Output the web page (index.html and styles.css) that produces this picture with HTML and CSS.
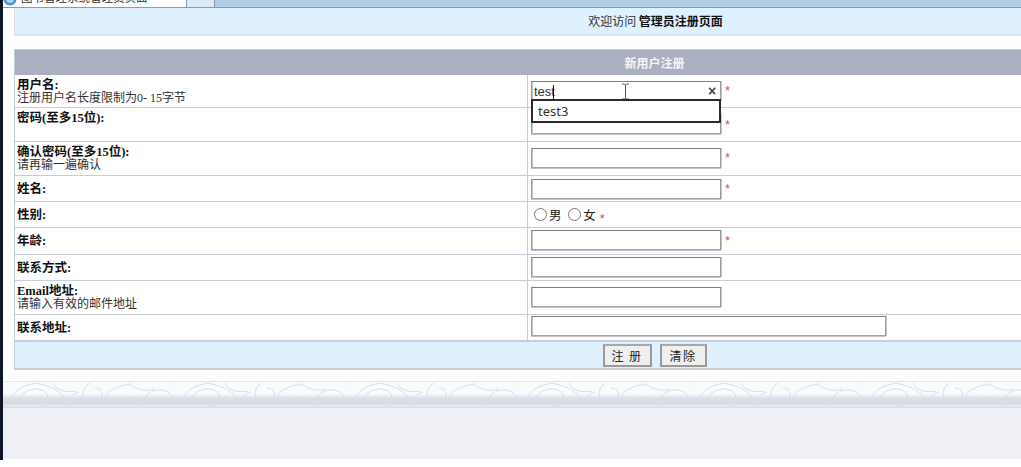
FILE: index.html
```html
<!DOCTYPE html>
<html lang="zh">
<head>
<meta charset="utf-8">
<title>管理员注册页面</title>
<link rel="stylesheet" href="styles.css">
</head>
<body>
<div class="edge"></div>
<div class="page">
  <div class="tabstrip">
    <div class="tab">
      <svg class="tab-icon" width="14" height="7" viewBox="0 0 14 7"><circle cx="7" cy="-1" r="6.5" fill="#3f8fd2"/><circle cx="7" cy="-1" r="4" fill="#a9d3f2"/></svg>
      <span class="tab-title">图书管理系统管理员页面</span>
    </div>
    <div class="tab-new"></div>
  </div>
  <div class="content">
    <div class="banner">欢迎访问 <b>管理员注册页面</b></div>
    <table class="form">
      <colgroup><col class="col-label"><col></colgroup>
      <tr class="head"><th colspan="2">新用户注册</th></tr>
      <tr class="h33">
        <td class="lab"><b>用户名:</b><br>注册用户名长度限制为0- 15字节</td>
        <td class="val val-first">
          <span class="field">
            <input class="txt" type="text" value="test">
            <span class="caret"></span>
            <span class="clear">×</span>
            <svg class="ibeam" width="9" height="17" viewBox="0 0 9 17"><path d="M1 1h2.500l1 1 1-1H8M4.500 2v13M1 16h2.500l1-1 1 1H8" fill="none" stroke="#555" stroke-width="1"/></svg>
            <span class="suggest">test3</span>
          </span><span class="req req-first">*</span>
        </td>
      </tr>
      <tr class="h34">
        <td class="lab"><b>密码(至多15位):</b></td>
        <td class="val val-low"><input class="txt" type="password"><span class="req">*</span></td>
      </tr>
      <tr class="h34">
        <td class="lab"><b>确认密码(至多15位):</b><br>请再输一遍确认</td>
        <td class="val"><input class="txt" type="password"><span class="req">*</span></td>
      </tr>
      <tr class="h26">
        <td class="lab lab-mid"><b>姓名:</b></td>
        <td class="val val-flat"><input class="txt" type="text"><span class="req">*</span></td>
      </tr>
      <tr class="h26">
        <td class="lab lab-mid"><b>性别:</b></td>
        <td class="val radios">
          <label class="choice"><input class="radio" type="radio" name="sex">男</label>
          <label class="choice"><input class="radio" type="radio" name="sex">女</label>
          <span class="req">*</span>
        </td>
      </tr>
      <tr class="h27">
        <td class="lab lab-mid lab-age"><b>年龄:</b></td>
        <td class="val"><input class="txt" type="text"><span class="req">*</span></td>
      </tr>
      <tr class="h26">
        <td class="lab lab-mid"><b>联系方式:</b></td>
        <td class="val"><input class="txt" type="text"></td>
      </tr>
      <tr class="h34">
        <td class="lab"><b>Email地址:</b><br>请输入有效的邮件地址</td>
        <td class="val"><input class="txt" type="text"></td>
      </tr>
      <tr class="h26">
        <td class="lab lab-mid"><b>联系地址:</b></td>
        <td class="val val-raised"><input class="txt txt-wide" type="text"></td>
      </tr>
      <tr class="actions">
        <td colspan="2"><button class="btn btn-reg" type="button">注 册</button><button class="btn" type="button">清除</button></td>
      </tr>
    </table>
  </div>
  <div class="band">
    <svg class="band-art" width="100%" height="26">
      <defs>
        <pattern id="floral" width="172" height="26" patternUnits="userSpaceOnUse">
          <g fill="none" stroke="#d8dce6" stroke-width="1">
            <path d="M6 26C7 14 14 4 30 2M16 26c-2-9 3-17 14-19 9-1 16 4 15 11-1 5-6 8-11 6M22 26c0-5 4-8 9-7"/>
            <path d="M30 1c12 1 26 6 31 15 2 4 2 7 1 10M50 1c3 7 12 10 23 8M66 26c-2-8 2-14 10-16"/>
            <path d="M86 1c-7 6-8 14-2 18 6 3 13 1 15-5 1-5-2-8-7-8M104 26c-5-7-2-15 6-19 6-3 12-5 18-4"/>
            <path d="M112 26c2-6 8-11 16-10 7 1 10 5 9 10M126 1c6 6 16 9 25 6M142 26c-3-7 0-14 8-17 8-3 17 0 20 7M158 26c0-5 3-8 7-8M170 1l2 2"/>
          </g>
        </pattern>
      </defs>
      <rect width="100%" height="26" fill="url(#floral)"/>
    </svg>
  </div>
  <div class="foot"></div>
</div>
</body>
</html>
```
FILE: styles.css
```css
html, body {
  margin: 0;
  height: 467px;
  overflow: hidden;
  background: #fff;
}
body {
  display: flex;
  align-items: flex-start;
  font-family: "Liberation Serif", "Noto Sans CJK SC", serif;
  font-size: 12px;
  color: #222;
}
.edge {
  flex: 0 0 3px;
  height: 460px;
  background: #0e1628;
}
.page {
  flex: 1;
  min-width: 0;
}
.tabstrip {
  display: flex;
  height: 7px;
  background: #b3cee7;
  border-bottom: 1px solid #8f9aa8;
  overflow: hidden;
}
.tab {
  display: flex;
  width: 183px;
  background: #fff;
  border-right: 1px solid #8f9aa8;
  font-family: "Noto Sans CJK SC", sans-serif;
  font-size: 11.500px;
  line-height: 12px;
  color: #333;
}
.tab-icon {
  flex: none;
  margin-right: 4px;
}
.tab-title {
  margin-top: -9px;
  white-space: nowrap;
  height: 16px;
}
.tab-new {
  width: 27px;
  background: #dce9f8;
  border-right: 1px solid #8f9aa8;
}
.content {
  padding-left: 11px;
  overflow: hidden;
}
.banner {
  box-sizing: border-box;
  width: 1282px;
  height: 28px;
  background: #dff0fe;
  border-left: 1px solid #dedfe2;
  border-bottom: 2px solid #e2e3e6;
  text-align: center;
  line-height: 26px;
  font-family: "Noto Sans CJK SC", sans-serif;
  font-size: 12px;
  color: #333;
}
.banner b {
  color: #111;
}
.form {
  width: 1282px;
  table-layout: fixed;
  border-collapse: separate;
  border-spacing: 0;
  margin-top: 13px;
  border-left: 1px solid #c8ccd8;
}
.col-label {
  width: 513px;
}
.head th {
  height: 25px;
  padding: 0 2px 0 0;
  background: #abb0c0;
  border-top: 1px solid #c6c8d0;
  color: #f4f5f8;
  font-size: 12px;
  font-family: "Noto Sans CJK SC", sans-serif;
  text-align: center;
  vertical-align: middle;
}
.form td {
  padding: 0;
  border-bottom: 1px solid #c9cdd9;
  box-sizing: border-box;
}
.h33 { height: 33px; }
.h34 { height: 34px; }
.h26 { height: 26px; }
.h27 { height: 27px; }
.lab {
  padding: 4px 0 0 2px !important;
  vertical-align: top;
  line-height: 13px;
  color: #333;
  border-right: 1px solid #c9cdd9;
}
.lab b {
  color: #111;
  font-size: 12.500px;
}
.lab-mid {
  padding-top: 2px !important;
  vertical-align: middle;
}
.lab-age {
  padding-top: 0 !important;
}
.val {
  padding: 0 0 2px 3px !important;
  vertical-align: middle;
}
.val-first {
  padding: 6px 0 0 3px !important;
  vertical-align: top;
}
.val-low {
  vertical-align: bottom;
  padding-bottom: 7px !important;
}
.val-flat {
  padding-bottom: 0 !important;
}
.val-raised {
  padding-bottom: 4px !important;
}
.txt {
  box-sizing: border-box;
  width: 190px;
  height: 20px;
  margin: 0;
  padding: 0 2px;
  border: 1px solid #9d9d9d;
  border-top-color: #7f7f7f;
  border-bottom-color: #a6a6a6;
  box-shadow: inset 1px 0 0 #c4c4c4, 0 1px 0 #c4c4c4, 1px 0 0 #c4c4c4;
  background: #fff;
  font-family: "Liberation Sans", sans-serif;
  font-size: 13px;
  color: #333;
  vertical-align: middle;
  outline: none;
}
.txt-wide {
  width: 355px;
}
.req {
  margin-left: 4px;
  color: #d9534f;
  font-family: "Liberation Sans", sans-serif;
  font-size: 13px;
  vertical-align: middle;
}
.req-first {
  vertical-align: top;
  line-height: 20px;
}
.field {
  position: relative;
  display: inline-block;
  vertical-align: top;
}
.field .txt {
  display: block;
}
.caret {
  position: absolute;
  left: 22px;
  top: 4px;
  width: 1px;
  height: 14px;
  background: #111;
}
.clear {
  position: absolute;
  left: 177px;
  top: 1px;
  font: bold 14px/18px "Liberation Sans", sans-serif;
  color: #444;
}
.ibeam {
  position: absolute;
  left: 90px;
  top: 2px;
}
.suggest {
  position: absolute;
  z-index: 2;
  left: 0;
  top: 18px;
  box-sizing: border-box;
  width: 190px;
  height: 24px;
  padding-left: 5px;
  background: #fff;
  border: 2px solid #2b2b2b;
  font-family: "Noto Sans", sans-serif;
  font-size: 13px;
  line-height: 20px;
  color: #333;
}
.radios {
  padding: 2px 0 0 6px !important;
  font-family: "Noto Sans CJK SC", sans-serif;
  font-size: 12.500px;
  color: #222;
}
.choice {
  display: inline-flex;
  align-items: center;
  margin-right: 4px;
}
.radio {
  width: 13px;
  height: 13px;
  margin: 0 2px 0 0;
}
.radios .req {
  margin-left: -3px;
}
.actions td {
  height: 29px;
  padding: 2px 2px 0 0;
  background: #dff0fe;
  border-top: 1px solid #c9cdd9;
  border-bottom: 2px solid #c9cdd9;
  text-align: center;
  vertical-align: top;
}
.btn {
  box-sizing: border-box;
  width: 47px;
  height: 23px;
  padding: 0;
  background: #efefef;
  border: 2px solid #9a9a9a;
  border-top-color: #a8a8a8;
  font-family: "Noto Sans CJK SC", sans-serif;
  font-size: 12px;
  color: #222;
  letter-spacing: 1.500px;
}
.btn-reg {
  width: 49px;
  margin-right: 8px;
}
.band {
  box-sizing: border-box;
  height: 27px;
  margin-top: 11px;
  border-top: 1px solid #e2e5ec;
  background: linear-gradient(#fafbfd 0, #f9fafc 45%, #dbe0e8 62%, #d5dae4 82%, #e9ebf0 92%, #d5d9e2 100%);
}
.band-art {
  display: block;
}
.foot {
  height: 51px;
  background: #eff0f5;
}
```
